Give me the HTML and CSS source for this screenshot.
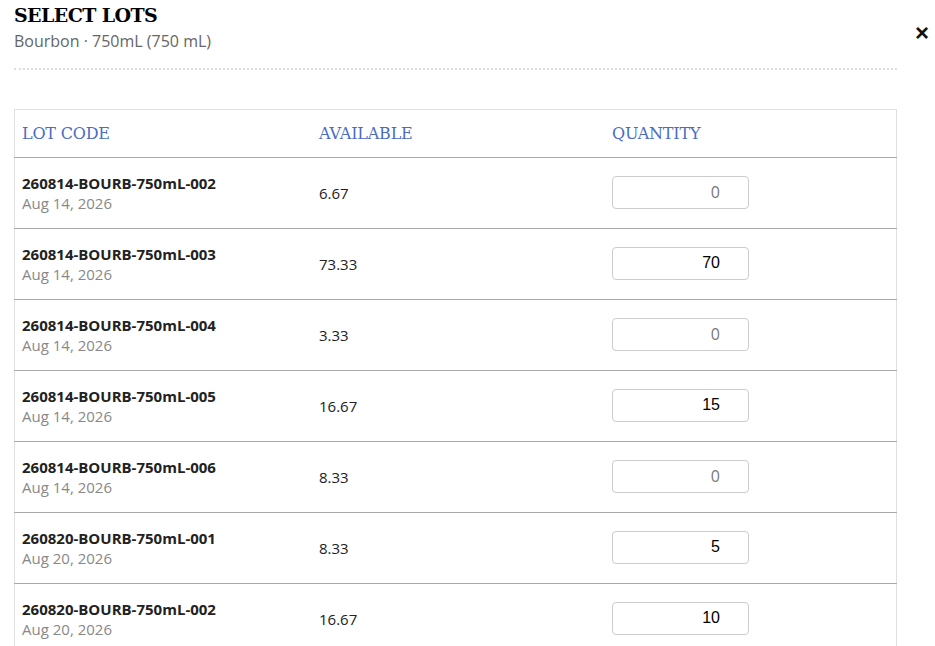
FILE: index.html
```html
<!DOCTYPE html>
<html>
  <head>
    <meta charset='utf-8'>
    <title>Select lots</title>
    <link rel="stylesheet" href="styles.css">
  </head>
  <body>
    <div class='modal'>
      <div class='head'>
        <div class='titles'>
          <h1>SELECT LOTS</h1>
          <div class='sub'>Bourbon · 750mL (750 mL)</div>
        </div>
        <span class='close'>&times;</span>
      </div>
      <div class='rule'></div>
      <table class='lots'>
        <tr>
          <th class='c1'>LOT CODE</th>
          <th class='c2'>AVAILABLE</th>
          <th>QUANTITY</th>
        </tr>
        <tr>
          <td><b>260814-BOURB-750mL-002</b><span class='date'>Aug 14, 2026</span></td>
          <td>6.67</td>
          <td><input class='qty empty' value='0'></td>
        </tr>
        <tr>
          <td><b>260814-BOURB-750mL-003</b><span class='date'>Aug 14, 2026</span></td>
          <td>73.33</td>
          <td><input class='qty' value='70'></td>
        </tr>
        <tr>
          <td><b>260814-BOURB-750mL-004</b><span class='date'>Aug 14, 2026</span></td>
          <td>3.33</td>
          <td><input class='qty empty' value='0'></td>
        </tr>
        <tr>
          <td><b>260814-BOURB-750mL-005</b><span class='date'>Aug 14, 2026</span></td>
          <td>16.67</td>
          <td><input class='qty' value='15'></td>
        </tr>
        <tr>
          <td><b>260814-BOURB-750mL-006</b><span class='date'>Aug 14, 2026</span></td>
          <td>8.33</td>
          <td><input class='qty empty' value='0'></td>
        </tr>
        <tr>
          <td><b>260820-BOURB-750mL-001</b><span class='date'>Aug 20, 2026</span></td>
          <td>8.33</td>
          <td><input class='qty' value='5'></td>
        </tr>
        <tr>
          <td><b>260820-BOURB-750mL-002</b><span class='date'>Aug 20, 2026</span></td>
          <td>16.67</td>
          <td><input class='qty' value='10'></td>
        </tr>
      </table>
    </div>
  </body>
</html>
```

FILE: styles.css
```css
body {
  margin: 0;
  font-family: "Open Sans", "Liberation Sans", sans-serif;
  font-size: 15px;
  color: #222;
  background: #fff;
  overflow: hidden;
}
.modal {
  padding: 1px 38px 0 14px;
}
.head {
  display: flex;
  justify-content: space-between;
  align-items: flex-start;
}
h1 {
  margin: 0;
  font-family: "DejaVu Serif", "Liberation Serif", serif;
  font-size: 19px;
  font-weight: bold;
  letter-spacing: -0.6px;
  color: #000;
  line-height: 28px;
}
.sub {
  font-size: 16px;
  color: #666;
  line-height: 22px;
  margin-top: 1px;
}
.close {
  font-family: "Liberation Sans", sans-serif;
  font-size: 24px;
  font-weight: bold;
  line-height: 20px;
  margin-top: 22px;
  margin-right: -32px;
  color: #111;
}
.rule {
  border-top: 2px dotted #ddd;
  margin: 16px 0 39px;
}
table.lots {
  width: 100%;
  border-collapse: collapse;
  border: 1px solid #e0e0e0;
}
th {
  font-family: "DejaVu Serif", "Liberation Serif", serif;
  font-weight: normal;
  font-size: 16px;
  letter-spacing: -0.2px;
  color: #4a6cc2;
  text-align: left;
  height: 47px;
  padding: 0 7px;
  border-bottom: 1px solid #aaa;
}
th.c1 { width: 283px; }
th.c2 { width: 279px; }
td {
  height: 70px;
  padding: 0 7px;
  border-bottom: 1px solid #aaa;
  vertical-align: middle;
}
td b {
  display: block;
  font-weight: bold;
  line-height: 20px;
}
.date {
  display: block;
  color: #888;
  line-height: 20px;
}
.qty {
  box-sizing: border-box;
  width: 137px;
  height: 33px;
  margin-top: -2px;
  border: 1px solid #ccc;
  border-radius: 4px;
  padding: 0 28px 0 6px;
  text-align: right;
  font-family: "Liberation Sans", sans-serif;
  font-size: 16px;
  color: #000;
}
.qty.empty {
  font-family: "Open Sans", sans-serif;
  color: #777;
}
```
